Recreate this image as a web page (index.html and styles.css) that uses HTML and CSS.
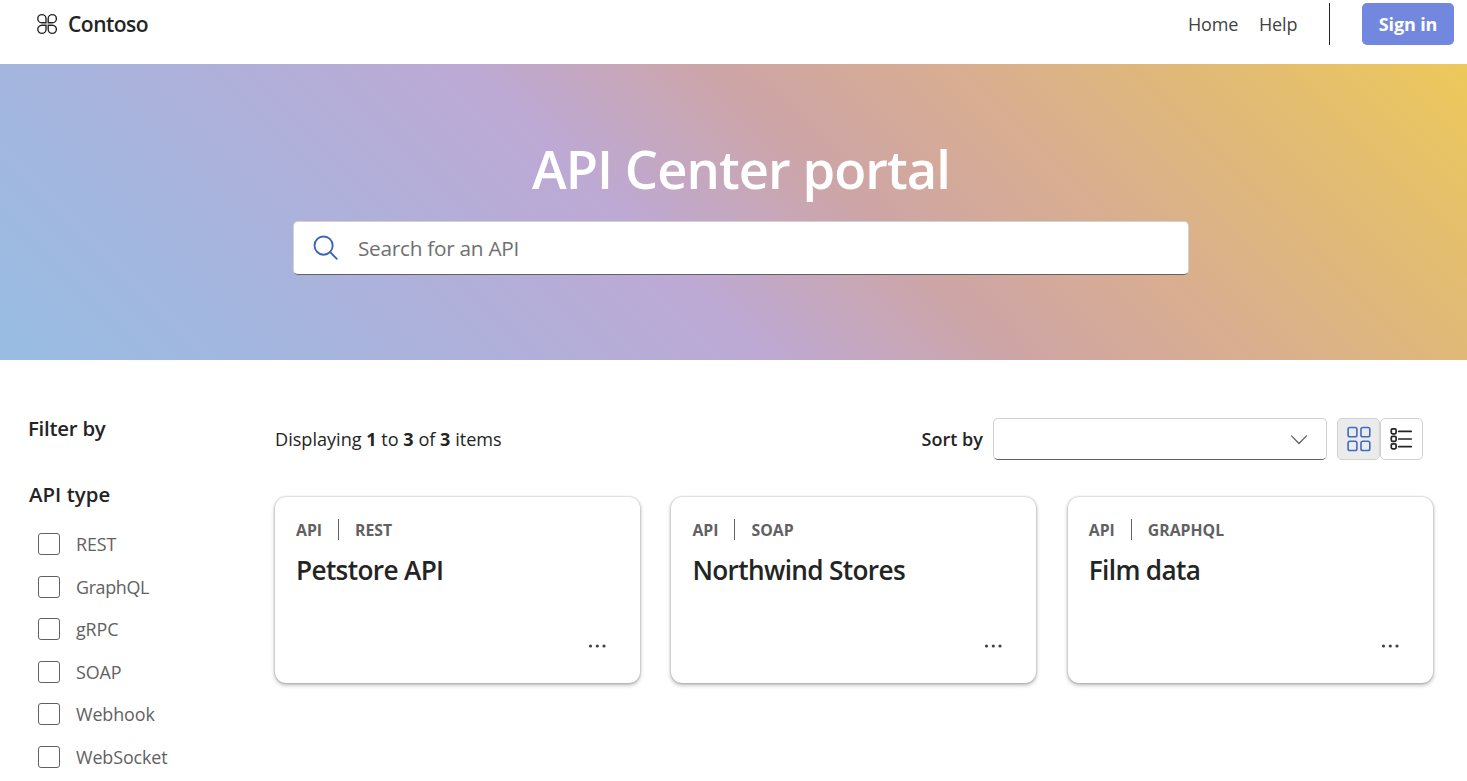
FILE: index.html
```html
<!DOCTYPE html>
<html lang="en">
<head>
<meta charset="utf-8">
<title>API Center portal</title>
<link rel="stylesheet" href="styles.css">
</head>
<body>
<header class="header">
  <a class="brand">
    <svg class="brand-icon" width="22" height="22" viewBox="0 0 22 22" fill="none" stroke="#242424" stroke-width="1.4">
      <path d="M10 9.8H5.8A4.1 4.1 0 1 1 10 5.6Z"/>
      <path d="M12.2 9.8V5.6A4.1 4.1 0 1 1 16.4 9.8Z"/>
      <path d="M10 12.2V16.4A4.1 4.1 0 1 1 5.8 12.2Z"/>
      <path d="M12.2 12.2H16.4A4.1 4.1 0 1 1 12.2 16.4Z"/>
    </svg>
    <span class="brand-name">Contoso</span>
  </a>
  <nav class="nav">
    <a class="nav-home">Home</a>
    <a class="nav-help">Help</a>
    <span class="nav-line"></span>
    <button class="signin">Sign in</button>
  </nav>
</header>
<section class="hero">
  <h1 class="hero-title">API Center portal</h1>
  <div class="search">
    <svg width="26" height="26" viewBox="0 0 26 26" fill="none" stroke="#3a66ba" stroke-width="1.9" stroke-linecap="round">
      <circle cx="10.6" cy="10.6" r="9.1"/><path d="M17.2 17.2L23.8 23.8"/>
    </svg>
    <span class="search-text">Search for an API</span>
  </div>
</section>
<main class="main">
  <aside class="filters">
    <h2 class="filter-title">Filter by</h2>
    <h3 class="filter-group">API type</h3>
    <ul class="options">
      <li><i class="box"></i><span>REST</span></li>
      <li><i class="box"></i><span class="tight">GraphQL</span></li>
      <li><i class="box"></i><span>gRPC</span></li>
      <li><i class="box"></i><span>SOAP</span></li>
      <li><i class="box"></i><span>Webhook</span></li>
      <li><i class="box"></i><span>WebSocket</span></li>
    </ul>
  </aside>
  <section class="content">
    <div class="toolbar">
      <p class="count">Displaying <b>1</b> to <b>3</b> of <b>3</b> items</p>
      <span class="sort-label">Sort by</span>
      <div class="select">
        <svg width="18" height="12" viewBox="0 0 18 12" fill="none" stroke="#616161" stroke-width="1.3" stroke-linecap="round"><path d="M1.5 2.9L9 10.5L16.5 2.9"/></svg>
      </div>
      <div class="views">
        <button class="view active">
          <svg width="26" height="26" viewBox="0 0 26 26" fill="none" stroke="#3f6cc0" stroke-width="1.6">
            <rect x="2.1" y="1.5" width="8.8" height="9.2" rx="1.8"/><rect x="15" y="1.5" width="8.8" height="9.2" rx="1.8"/>
            <rect x="2.1" y="15.3" width="8.8" height="9.2" rx="1.8"/><rect x="15" y="15.3" width="8.8" height="9.2" rx="1.8"/>
          </svg>
        </button>
        <button class="view">
          <svg width="24" height="24" viewBox="0 0 24 24" fill="none" stroke="#242424" stroke-width="1.7">
            <rect x="1.3" y="1.8" width="4.8" height="5" rx="1.2"/><rect x="1.3" y="9.3" width="4.8" height="5" rx="1.2"/><rect x="1.3" y="16.8" width="4.8" height="5" rx="1.2"/>
            <path stroke-linecap="round" d="M8.7 4.4H21.2M8.7 12H21.2M8.7 19.7H21.2"/>
          </svg>
        </button>
      </div>
    </div>
    <div class="cards">
      <article class="card">
        <div class="tags"><span>API</span><i class="tag-line"></i><span>REST</span></div>
        <h4 class="card-title">Petstore API</h4>
        <svg class="more" width="20" height="4" viewBox="0 0 20 4" fill="#424242"><circle cx="3.5" cy="2" r="1.6"/><circle cx="10.3" cy="2" r="1.6"/><circle cx="17" cy="2" r="1.6"/></svg>
      </article>
      <article class="card">
        <div class="tags"><span>API</span><i class="tag-line"></i><span>SOAP</span></div>
        <h4 class="card-title">Northwind Stores</h4>
        <svg class="more" width="20" height="4" viewBox="0 0 20 4" fill="#424242"><circle cx="3.5" cy="2" r="1.6"/><circle cx="10.3" cy="2" r="1.6"/><circle cx="17" cy="2" r="1.6"/></svg>
      </article>
      <article class="card">
        <div class="tags"><span>API</span><i class="tag-line"></i><span>GRAPHQL</span></div>
        <h4 class="card-title">Film data</h4>
        <svg class="more" width="20" height="4" viewBox="0 0 20 4" fill="#424242"><circle cx="3.5" cy="2" r="1.6"/><circle cx="10.3" cy="2" r="1.6"/><circle cx="17" cy="2" r="1.6"/></svg>
      </article>
    </div>
  </section>
</main>
</body>
</html>
```
FILE: styles.css
```css
* { box-sizing: border-box; }
body, h1, h2, h3, h4, p, ul { margin: 0; padding: 0; }
body {
  height: 781px;
  overflow: hidden;
  background: #fff;
  color: #242424;
  font-family: "Open Sans", "Noto Sans", sans-serif;
  font-size: 18px;
  white-space: nowrap;
}
svg { display: block; flex: none; }
button { padding: 0; border: 0; font-family: inherit; }

.header { display: flex; justify-content: space-between; height: 64px; padding: 3px 13px 0 36px; }
.brand { display: flex; align-items: center; height: 42px; gap: 10px; }
.brand-name { font-size: 21px; font-weight: 550; letter-spacing: -0.5px; line-height: 43px; }
.nav { display: flex; height: 42px; line-height: 42px; color: #424242; }
.nav-home { width: 71px; letter-spacing: -0.15px; }
.nav-help { width: 70px; letter-spacing: -0.15px; }
.nav-line { width: 1px; margin-right: 32px; background: #242424; }
.signin { width: 92px; border-radius: 5px; background: #7288de; color: #fff; font-size: 18px; font-weight: 700; letter-spacing: -0.15px; line-height: 42px; }

.hero {
  display: flex;
  flex-direction: column;
  height: 296px;
  padding: 64px 278px 0 293px;
  background: linear-gradient(45deg, #98bde3 0%, #a5b5de 18%, #bda9d4 43.5%, #cea5a5 58%, #d9ae90 71%, #e0b978 83.5%, #edc95a 100%);
}
.hero-title { height: 93px; color: #fff; font-size: 52.5px; font-weight: 600; letter-spacing: -0.95px; line-height: 81px; text-align: center; }
.search { display: flex; align-items: center; height: 54px; padding-left: 19px; gap: 19px; border: 1px solid #d1d1d1; border-bottom-color: #616161; border-radius: 5px; background: #fff; }
.search-text { color: #707070; font-size: 20.8px; letter-spacing: -0.28px; }

.main { display: flex; height: 421px; }
.filters { width: 275px; padding: 53px 0 0 28px; }
.filter-title, .filter-group { font-size: 20.4px; font-weight: 550; letter-spacing: -0.25px; line-height: 30px; }
.filter-group { margin-top: 36px; padding-left: 1px; letter-spacing: 0.05px; }
.options { margin-top: 13.7px; padding-left: 10px; list-style: none; color: #616161; font-size: 17.9px; letter-spacing: -0.1px; }
.options li { display: flex; align-items: center; height: 42.55px; gap: 16px; }
.options .tight { letter-spacing: -0.35px; }
.box { width: 22px; height: 22px; border: 1px solid #616161; border-radius: 3px; }

.content { width: 1159px; padding-top: 58px; }
.toolbar { display: flex; height: 42px; line-height: 42px; }
.count { width: 646px; font-size: 18.1px; }
.sort-label { width: 72px; font-weight: 600; padding-left: 0.6px; }
.select { display: flex; align-items: center; justify-content: flex-end; width: 334px; padding-right: 18px; border: 1px solid #d1d1d1; border-bottom-color: #616161; border-radius: 5px; }
.views { display: flex; margin-left: 10px; }
.view { display: flex; align-items: center; justify-content: center; width: 43px; border: 1px solid #d1d1d1; border-radius: 5px; background: #fff; }
.view.active { background: #ebebeb; }

.cards { display: grid; grid-template-columns: repeat(3, 365px); column-gap: 31.4px; margin-top: 37px; }
.card { display: flex; flex-direction: column; height: 186px; padding: 21px 33px 0 21px; border-radius: 11px; background: #fff; box-shadow: 0 0 2px rgba(0,0,0,.3), 0 2px 4px rgba(0,0,0,.3); }
.tags { display: flex; height: 24px; color: #616161; font-size: 15.8px; font-weight: 700; line-height: 24px; }
.tag-line { width: 1px; height: 21px; margin: 1px 16px 0; background: #616161; }
.card-title { height: 56px; font-size: 26.2px; font-weight: 550; letter-spacing: -0.65px; line-height: 57px; }
.more { margin: 46px 0 0 auto; }
```
